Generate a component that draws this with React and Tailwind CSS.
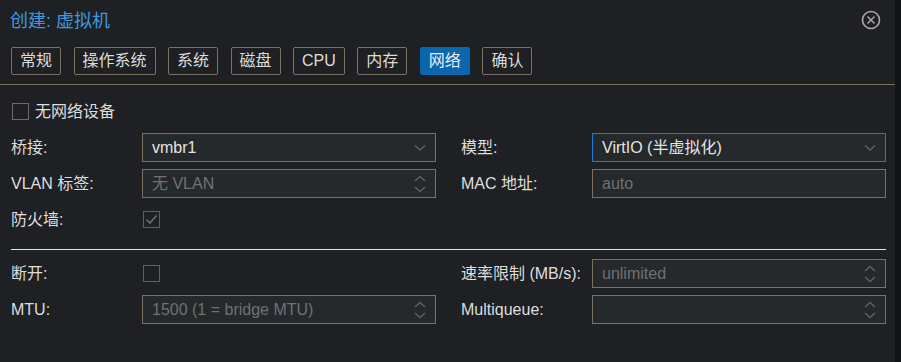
import React from "react";

const FONT = { fontFamily: '"Liberation Sans", "Noto Sans CJK SC", sans-serif' };

function ChevronDown() {
  return (
    <svg width="12" height="8" viewBox="0 0 12 8" className="shrink-0">
      <polyline points="1,1.5 6,6 11,1.5" fill="none" stroke="#5e6163" strokeWidth="1.5" />
    </svg>
  );
}

function Spinner() {
  return (
    <svg width="12" height="20" viewBox="0 0 12 20" className="shrink-0">
      <polyline points="1,7 6,2.5 11,7" fill="none" stroke="#5e6163" strokeWidth="1.5" />
      <polyline points="1,13 6,17.5 11,13" fill="none" stroke="#5e6163" strokeWidth="1.5" />
    </svg>
  );
}

function Field({ value, dim, kind, active }) {
  return (
    <div
      className={`flex h-[29px] w-[294px] items-center justify-between border bg-[#25292b] pl-[9px] pr-[9px] ${
        active ? "border-[#1a7fd4]" : "border-[#7c7264]"
      }`}
    >
      <span className={`pt-px text-[16px] leading-none ${dim ? "text-[#6f7173]" : "text-[#e4e4e4]"}`}>{value}</span>
      {kind === "select" ? <ChevronDown /> : kind === "spin" ? <Spinner /> : null}
    </div>
  );
}

function Checkbox({ checked, light }) {
  return (
    <div
      className={`flex h-[17px] w-[17px] items-center justify-center border ${
        light ? "border-[#6b6b6b]" : "border-[#5d5f60]"
      }`}
    >
      {checked && (
        <svg width="13" height="11" viewBox="0 0 13 11">
          <polyline points="1.5,5.5 5,9 11.5,1.5" fill="none" stroke="#6d6f70" strokeWidth="1.6" />
        </svg>
      )}
    </div>
  );
}

function Row({ label, children }) {
  return (
    <div className="flex h-[29px] items-center">
      <div className="w-[131px] shrink-0 pt-px text-[16px] leading-none text-[#dedede]">{label}</div>
      {children}
    </div>
  );
}

const tabs = ["常规", "操作系统", "系统", "磁盘", "CPU", "内存", "网络", "确认"];

export default function App() {
  return (
    <div className="flex h-[362px] w-[901px] overflow-hidden bg-[#1f2023]" style={FONT}>
      <div className="flex w-[895px] shrink-0 flex-col">
        {/* header */}
        <div className="flex h-[40px] items-center justify-between pl-[10px] pr-[14px]">
          <span className="pt-px text-[18px] leading-none text-[#3d9be0]">创建: 虚拟机</span>
          <svg width="20" height="20" viewBox="0 0 20 20">
            <circle cx="10" cy="10" r="8.5" fill="none" stroke="#a9a9a9" strokeWidth="1.6" />
            <line x1="6.5" y1="6.5" x2="13.5" y2="13.5" stroke="#a9a9a9" strokeWidth="1.5" />
            <line x1="13.5" y1="6.5" x2="6.5" y2="13.5" stroke="#a9a9a9" strokeWidth="1.5" />
          </svg>
        </div>
        {/* tabs */}
        <div className="flex gap-[12.5px] pl-[11px] pt-[7px] pb-[9px]">
          {tabs.map((t) => (
            <div
              key={t}
              className={`flex h-[28px] items-center rounded-[2px] border px-2 text-[16px] leading-none ${
                t === "网络"
                  ? "border-[#0b66ae] bg-[#0b66ae] text-[#e8eef5]"
                  : "border-[#7c7264] text-[#dcdcdc]"
              }`}
            >
              {t}
            </div>
          ))}
        </div>
        <div className="h-px bg-[#7c7264]" />
        {/* form */}
        <div className="px-[11px] pt-[12px]">
          <div className="grid grid-cols-[425px_425px] gap-x-[25px] gap-y-[7px]">
            <div className="flex h-[29px] items-center gap-[6px] pl-px">
              <Checkbox light />
              <span className="text-[16px] leading-none text-[#dedede]">无网络设备</span>
            </div>
            <div />
            <Row label="桥接:">
              <Field value="vmbr1" kind="select" />
            </Row>
            <Row label="模型:">
              <Field value="VirtIO (半虚拟化)" kind="select" active />
            </Row>
            <Row label="VLAN 标签:">
              <Field value="无 VLAN" dim kind="spin" />
            </Row>
            <Row label="MAC 地址:">
              <Field value="auto" dim />
            </Row>
            <Row label="防火墙:">
              <div className="pl-px">
                <Checkbox checked />
              </div>
            </Row>
            <div />
          </div>
          <div className="mt-[15px] h-px w-[875px] bg-[#e2e2e2]" />
          <div className="mt-[9px] grid grid-cols-[425px_425px] gap-x-[25px] gap-y-[7px]">
            <Row label="断开:">
              <div className="pl-px">
                <Checkbox />
              </div>
            </Row>
            <Row label="速率限制 (MB/s):">
              <Field value="unlimited" dim kind="spin" />
            </Row>
            <Row label="MTU:">
              <Field value="1500 (1 = bridge MTU)" dim kind="spin" />
            </Row>
            <Row label="Multiqueue:">
              <Field value="" dim kind="spin" />
            </Row>
          </div>
        </div>
      </div>
      <div className="flex-1 bg-[#131416]" />
    </div>
  );
}
